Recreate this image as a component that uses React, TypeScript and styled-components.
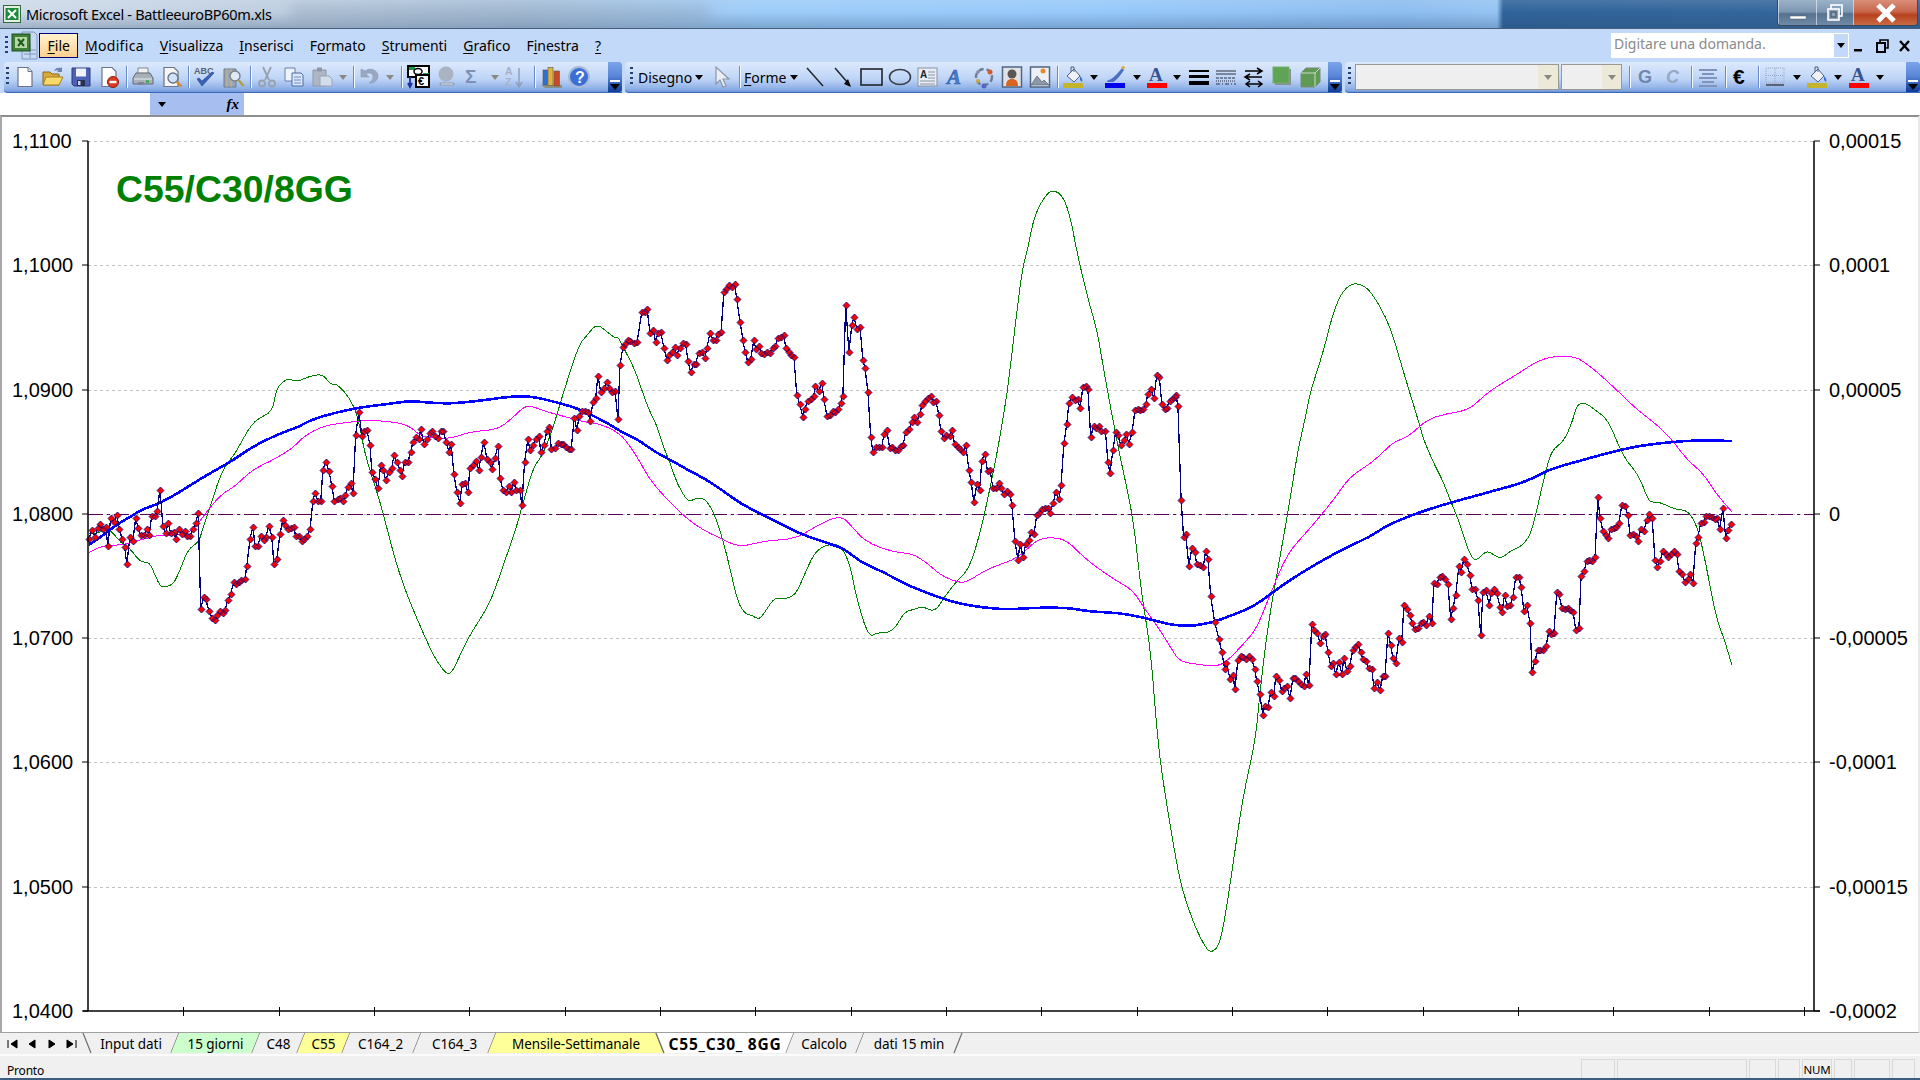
import React from "react"
import styled, { createGlobalStyle } from "styled-components"

const UI_FONT = `"Noto Sans", "Liberation Sans", sans-serif`

const GlobalStyle = createGlobalStyle`
  html, body {
    margin: 0;
    padding: 0;
    background: #fff;
    overflow: hidden;
  }
`

const Window = styled.div`
  width: 1920px;
  height: 1080px;
  display: flex;
  flex-direction: column;
  overflow: hidden;
  font-family: ${UI_FONT};
  color: #000;
`

const TitleBar = styled.div`
  position: relative;
  height: 28px;
  flex: none;
  display: flex;
  align-items: center;
  gap: 5px;
  padding-left: 3px;
  overflow: hidden;
  border-bottom: 1px solid #47607a;
  background:
    linear-gradient(180deg, rgba(255, 255, 255, 0.12) 0%, rgba(255, 255, 255, 0) 45%, rgba(40, 70, 110, 0.28) 100%),
    linear-gradient(
      90deg,
      #cfdbe9 0,
      #bccde0 300px,
      #a9c2dc 520px,
      #9ccbf8 760px,
      #96c8fa 1100px,
      #8cbcf0 1400px,
      #94c3f2 1497px,
      #30639a 1503px,
      #33669b 1780px
    );
`

const TitleSmudge = styled.div`
  position: absolute;
  left: 290px;
  top: 6px;
  width: 420px;
  height: 16px;
  background: #8ea0b6;
  opacity: 0.45;
  filter: blur(7px);
`

const TitleText = styled.span`
  position: relative;
  font-size: 14.5px;
  letter-spacing: -0.3px;
  white-space: nowrap;
`

const CaptionButtons = styled.div`
  position: absolute;
  right: 2px;
  top: 0;
  height: 25px;
  display: flex;
  border: 1px solid #3a4a5c;
  border-top: none;
  border-radius: 0 0 4px 4px;
  overflow: hidden;
`

const CaptionButton = styled.div<{ $w: number; $close?: boolean }>`
  width: ${(p) => p.$w}px;
  display: flex;
  align-items: center;
  justify-content: center;
  border-left: 1px solid rgba(255, 255, 255, 0.55);
  background: ${(p) =>
    p.$close
      ? "linear-gradient(180deg, #d98e78 0%, #c9684e 45%, #b8421f 60%, #c96a45 100%)"
      : "linear-gradient(180deg, #9bb2c9 0%, #7d96b0 48%, #56728f 55%, #6e8aa6 100%)"};
`

const MenuBar = styled.div`
  height: 33px;
  flex: none;
  display: flex;
  align-items: center;
  background: #c3d9f9;
  padding-left: 4px;
`

const Grip = styled.div`
  width: 3px;
  height: 20px;
  margin: 0 2px 0 1px;
  flex: none;
  background: repeating-linear-gradient(180deg, #27416e 0 2px, transparent 2px 5px);
`

const SheetLogo = styled.svg`
  width: 30px;
  height: 32px;
  flex: none;
  margin-right: -1px;
`

const MenuList = styled.div`
  display: flex;
  align-items: center;
  gap: 16px;
  font-size: 14px;
`

const MenuItem = styled.span<{ $open?: boolean; $track?: number }>`
  display: flex;
  align-items: center;
  height: 25px;
  white-space: nowrap;
  letter-spacing: ${(p) => p.$track ?? 0}px;
  ${(p) =>
    p.$open &&
    `
    margin-right: -9.400px;
    padding: 0 7.500px;
    box-sizing: border-box;
    border: 1px solid #000080;
    background: linear-gradient(180deg, #fff3cf 0%, #ffd08f 100%);
  `}
  u {
    text-underline-offset: 2px;
  }
`

const MenuRight = styled.div`
  margin-left: auto;
  display: flex;
  align-items: center;
`

const HelpBox = styled.div`
  width: 238px;
  height: 25px;
  display: flex;
  align-items: center;
  background: #fff;
  color: #8a8a8a;
  font-size: 14px;
  padding: 0 0 4px 3px;
  box-sizing: border-box;
  position: relative;
`

const HelpDrop = styled.div`
  position: absolute;
  right: 0;
  top: 0;
  bottom: 0;
  width: 16px;
  display: flex;
  align-items: center;
  justify-content: center;
  background: #c3d9f9;
  border: 1px solid #fff;
  box-sizing: border-box;
`

const MdiButtons = styled.div`
  display: flex;
  width: 71px;
  height: 25px;
  align-items: center;
  padding-left: 3px;
  box-sizing: border-box;
`

const MdiIcon = styled.svg`
  width: 21px;
  height: 16px;
  flex: none;
`

const ToolRow = styled.div`
  height: 31px;
  flex: none;
  display: flex;
  background: #c3d9f9;
  gap: 3px;
  padding-left: 4px;
`

const Toolbar = styled.div<{ $w: number }>`
  width: ${(p) => p.$w}px;
  flex: none;
  display: flex;
  align-items: center;
  position: relative;
  border-radius: 4px 0 0 4px;
  overflow: hidden;
  box-sizing: border-box;
  border-bottom: 1px solid #3b69b5;
  background: linear-gradient(180deg, #dde9fc 0%, #cfe0fa 25%, #bdd3f6 58%, #8dafe6 90%, #6f96da 100%);
`

const Tool = styled.div<{ $w: number }>`
  width: ${(p) => p.$w}px;
  height: 26px;
  flex: none;
  display: flex;
  align-items: center;
  justify-content: center;
`

const Glyph = styled.svg`
  width: 24px;
  height: 24px;
  display: block;
  overflow: visible;
`

const Sep = styled.div<{ $w: number }>`
  width: ${(p) => p.$w}px;
  height: 22px;
  flex: none;
  display: flex;
  justify-content: center;
  &::before {
    content: "";
    width: 1px;
    background: #6a8cc8;
    box-shadow: 1px 0 0 #f4f8ff;
  }
`

const DropArrow = styled.span<{ $muted?: boolean }>`
  width: 0;
  height: 0;
  border-left: 4px solid transparent;
  border-right: 4px solid transparent;
  border-top: 5px solid ${(p) => (p.$muted ? "#8a8a80" : "#000")};
`

const TextTool = styled.div<{ $w: number }>`
  width: ${(p) => p.$w}px;
  height: 26px;
  flex: none;
  display: flex;
  align-items: center;
  gap: 3px;
  font-size: 14px;
  white-space: nowrap;
  u {
    text-underline-offset: 2px;
  }
`

const Overflow = styled.div`
  position: absolute;
  right: 0;
  top: 0;
  bottom: 0;
  width: 14px;
  display: flex;
  flex-direction: column;
  align-items: center;
  justify-content: flex-end;
  gap: 2px;
  padding-bottom: 2px;
  box-sizing: border-box;
  border-radius: 0 3px 3px 0;
  background: linear-gradient(180deg, #7ba4ec 0%, #5b87d8 45%, #0e3c98 100%);
  &::before {
    content: "";
    width: 10px;
    height: 2px;
    background: #fff;
  }
  &::after {
    content: "";
    border-left: 5px solid transparent;
    border-right: 5px solid transparent;
    border-top: 6px solid #000;
  }
`

const Combo = styled.div<{ $w: number; $btn: number }>`
  width: ${(p) => p.$w}px;
  height: 26px;
  flex: none;
  box-sizing: border-box;
  border: 1px solid #9a9a94;
  background: #efefef;
  display: flex;
  justify-content: flex-end;
  margin-right: 2px;
  & > span {
    width: ${(p) => p.$btn}px;
    background: #ece9d8;
    display: flex;
    align-items: center;
    justify-content: center;
  }
`

const FormulaRow = styled.div`
  height: 22px;
  flex: none;
  display: flex;
  background: #fff;
`

const NameBox = styled.div`
  width: 150px;
`

const FxBlock = styled.div`
  width: 94px;
  background: #a6bff0;
  display: flex;
  align-items: center;
  justify-content: space-between;
  padding: 0 5px 0 8px;
  box-sizing: border-box;
  font-family: "Liberation Serif", serif;
  font-style: italic;
  font-weight: bold;
  font-size: 15px;
`

const ChartPanel = styled.div`
  flex: 1;
  min-height: 0;
  background: #fff;
  border-top: 2px solid #8f8f8f;
  border-left: 2px solid #a8a8a8;
  border-right: 2px solid #e8e8e8;
  border-bottom: 1px solid #a0a0a0;
  box-sizing: border-box;
  overflow: hidden;
`

const ChartSvg = styled.svg`
  display: block;
  margin: -2px 0 0 -2px;
  text {
    font-family: "Liberation Sans", Arial, sans-serif;
  }
`

const TabBar = styled.div`
  height: 21px;
  flex: none;
  display: flex;
  background: #f0f0f0;
  border-bottom: 2px solid #fbfbfb;
`

const TabNav = styled.div`
  width: 83px;
  flex: none;
  display: flex;
  align-items: center;
  padding-left: 6px;
  box-sizing: border-box;
  gap: 8px;
`

const NavGlyph = styled.svg`
  width: 12px;
  height: 10px;
  flex: none;
`

const TabItem = styled.div<{ $w: number }>`
  position: relative;
  width: ${(p) => p.$w}px;
  flex: none;
  height: 20px;
`

const TabShape = styled.svg`
  position: absolute;
  left: 0;
  top: 0;
  overflow: visible;
`

const TabLabel = styled.span<{ $active?: boolean; $shift: number }>`
  position: absolute;
  left: ${(p) => p.$shift}px;
  right: ${(p) => -p.$shift}px;
  top: 1px;
  height: 20px;
  display: flex;
  align-items: center;
  justify-content: center;
  font-size: ${(p) => (p.$active ? 15.5 : 13.5)}px;
  letter-spacing: ${(p) => (p.$active ? 0.8 : -0.05)}px;
  font-weight: ${(p) => (p.$active ? 700 : 400)};
  white-space: nowrap;
`

const StatusBar = styled.div`
  height: 22px;
  flex: none;
  display: flex;
  align-items: flex-end;
  background: #f0f0f0;
  font-size: 12px;
  letter-spacing: -0.2px;
  padding-left: 7px;
  box-sizing: border-box;
`

const StatusText = styled.span`
  height: 19px;
  padding-top: 3px;
  box-sizing: border-box;
  display: flex;
  align-items: center;
`

const StatusCells = styled.div`
  margin-left: auto;
  display: flex;
  gap: 2px;
  padding-right: 5px;
`

const StatusCell = styled.div<{ $w: number }>`
  width: ${(p) => p.$w}px;
  height: 19px;
  box-sizing: border-box;
  border: 1px solid #d9d9d9;
  border-bottom: none;
  font-size: 11.5px;
  display: flex;
  align-items: center;
  justify-content: center;
`

const BottomStrip = styled.div`
  height: 2px;
  flex: none;
  background: #3d5e80;
`

/* ---------- toolbar drawings ---------- */

const doc = (fill = "#fff") => (
  <path d="M5 2.5h10l4 4v15H5z" fill={fill} stroke="#6b7488" strokeWidth="1.2" />
)

const icons: Record<string, React.ReactNode> = {
  new: (
    <>
      {doc()}
      <path d="M15 2.5v4h4" fill="#dde3ee" stroke="#6b7488" />
    </>
  ),
  open: (
    <>
      <path d="M2 7h7l2 2h7v11H2z" fill="#d9a93a" stroke="#8a6a1a" />
      <path d="M5 12h17l-4 8H2z" fill="#f7d96a" stroke="#a57f20" />
      <path d="M13 6c1-3 4-4 7-3l1-1v5h-5l1.500-1.500C16 5 14.500 5 13 6z" fill="#6b83b5" />
    </>
  ),
  save: (
    <>
      <path d="M3 3h18v18H5l-2-2z" fill="#4d62b5" stroke="#2c3a80" />
      <rect x="7" y="3.500" width="10" height="8" fill="#eef2fb" />
      <rect x="8" y="15" width="8" height="6" fill="#2a2f55" />
      <rect x="9" y="16" width="2.500" height="4" fill="#c8cfe0" />
    </>
  ),
  perm: (
    <>
      {doc()}
      <circle cx="16" cy="17" r="5.500" fill="#d93a22" stroke="#8f1d0e" />
      <rect x="12.500" y="15.800" width="7" height="2.400" fill="#fff" />
    </>
  ),
  print: (
    <>
      <path d="M7 3h10v7H7z" fill="#f2f2f2" stroke="#7d8794" />
      <path d="M5 8l-3 5v6h20v-6l-3-5z" fill="#a8b0ba" stroke="#5f6875" />
      <path d="M3 14h18" stroke="#e7ebf0" />
      <rect x="15" y="15.500" width="3" height="2" fill="#23a03a" />
      <path d="M7 17h6v3H7z" fill="#7d8794" />
    </>
  ),
  preview: (
    <>
      {doc("#f6f6f6")}
      <circle cx="14" cy="13" r="5" fill="#cfe2f7" stroke="#6b7488" strokeWidth="1.400" />
      <path d="M17.500 16.500l5 5" stroke="#d08a35" strokeWidth="2.400" />
    </>
  ),
  spell: (
    <>
      <text x="1" y="9" fontSize="9" fontWeight="700" fill="#5a6470" fontFamily="Liberation Sans">
        ABC
      </text>
      <path d="M4 14l5 7L21 8l-2-1-10 9-3-3z" fill="#3a63b5" stroke="#27458a" strokeWidth=".6" />
    </>
  ),
  research: (
    <>
      <path d="M3 4h12v18H3z" fill="#9aa6b8" stroke="#6d7a90" />
      <path d="M6 4v18M10 4v18" stroke="#c9b772" />
      <circle cx="14" cy="11" r="5" fill="#dfe9f6" stroke="#77818f" strokeWidth="1.400" />
      <path d="M17.500 15l5 6" stroke="#b79c3a" strokeWidth="2.400" />
    </>
  ),
  cut: (
    <g fill="none" stroke="#98a1ae" strokeWidth="1.800">
      <path d="M8 2l6 13M16 2l-6 13" />
      <circle cx="7" cy="18.500" r="3" />
      <circle cx="17" cy="18.500" r="3" />
    </g>
  ),
  copy: (
    <>
      <path d="M3 3h10v13H3z" fill="#eef3fb" stroke="#6b7fa6" />
      <path d="M10 8h9l2 2v11H10z" fill="#dbe8fa" stroke="#4c6aa5" />
      <path d="M12 12h7M12 15h7M12 18h7" stroke="#6b8ac2" />
    </>
  ),
  paste: (
    <>
      <path d="M3 5h13v16H3z" fill="#aeb6c2" stroke="#8d97a6" />
      <rect x="7" y="2.500" width="5" height="4" fill="#8d97a6" />
      <path d="M10 11h9l3 3v7H10z" fill="#d3dceb" stroke="#9aa5b6" />
    </>
  ),
  undo: (
    <path
      d="M4 4v8h8l-3-3c3-2 7-1 7 3 0 3-2 5-4 6h3c3-1 6-3 6-7 0-6-8-9-13-5z"
      fill="#99a8c0"
      stroke="#8b9ab2"
      strokeWidth=".6"
    />
  ),
  euro: (
    <>
      <rect x="1" y="1" width="21" height="11" fill="#fff" stroke="#000" strokeWidth="2" />
      <path d="M2 2h6v3H2zM16 8h6v4h-6z" fill="#1c9a3e" />
      <ellipse cx="11" cy="6.500" rx="4" ry="3" fill="none" stroke="#000" strokeWidth="1.500" />
      <rect x="8" y="9" width="15" height="14" fill="#000" />
      <rect x="10" y="11" width="11" height="10" fill="#fff" />
      <text x="11" y="20" fontSize="11" fontWeight="700" fontFamily="Liberation Sans">
        €
      </text>
      <path d="M3 12v9M1 18l2 4 2-4" fill="none" stroke="#1c2fa0" strokeWidth="1.800" />
    </>
  ),
  link: (
    <>
      <circle cx="11" cy="9" r="7.500" fill="#a9b3c2" />
      <path d="M6 19h5M13 19h5" stroke="#8d98a8" strokeWidth="3" strokeLinecap="round" />
      <path d="M6 19h12" stroke="#e0e6ef" strokeWidth="1" />
    </>
  ),
  sigma: (
    <text x="4" y="18" fontSize="19" fontWeight="700" fill="#7f90b5" fontFamily="Liberation Sans">
      Σ
    </text>
  ),
  sort: (
    <>
      <text x="1" y="10" fontSize="10.500" fontWeight="700" fill="#a5b2c8" fontFamily="Liberation Sans">
        A
      </text>
      <text x="1" y="21" fontSize="10.500" fontWeight="700" fill="#a5b2c8" fontFamily="Liberation Sans">
        Z
      </text>
      <path d="M15 3v18M12 17l3 5 3-5" fill="none" stroke="#90a0bb" strokeWidth="1.500" />
    </>
  ),
  chart: (
    <>
      <path d="M2 20l4 3h17v-3z" fill="#8d8f80" />
      <rect x="4" y="5" width="4.500" height="15" fill="#2f6fcf" stroke="#5a5a50" strokeWidth=".6" />
      <rect x="9" y="2.500" width="5" height="18" fill="#e3b23c" stroke="#5a5a50" strokeWidth=".6" />
      <rect x="15" y="6" width="5.500" height="15" fill="#c9482a" stroke="#5a5a50" strokeWidth=".6" />
    </>
  ),
  help: (
    <>
      <circle cx="12" cy="12" r="10" fill="#3a6fd6" stroke="#a7bbd8" strokeWidth="2" />
      <text x="8" y="18" fontSize="16" fontWeight="700" fill="#fff" fontFamily="Liberation Sans">
        ?
      </text>
    </>
  ),
  cursor: (
    <path d="M7 2v17l4-4 3 7 3-1-3-7h6z" fill="#e8edf7" stroke="#8a95a8" strokeWidth="1.200" />
  ),
  line: <path d="M4 3l16 18" stroke="#22242a" strokeWidth="1.500" />,
  arrow: (
    <>
      <path d="M4 3l13 15" stroke="#22242a" strokeWidth="1.500" />
      <path d="M20 22l-7-3 4-5z" fill="#000" />
    </>
  ),
  rect: <rect x="1" y="4" width="21" height="16" fill="none" stroke="#22242a" strokeWidth="1.600" />,
  oval: <ellipse cx="12" cy="12" rx="10.500" ry="7.500" fill="none" stroke="#3c3f48" strokeWidth="1.600" />,
  textbox: (
    <>
      <rect x="2" y="3" width="19" height="18" fill="#e9edf3" stroke="#8893a5" />
      <text x="4" y="13" fontSize="10" fontWeight="700" fill="#20242c" fontFamily="Liberation Sans">
        A
      </text>
      <path d="M12 7h7M12 10h7M12 13h7M4 16h15M4 19h15" stroke="#8a94a5" />
    </>
  ),
  wordart: (
    <text x="3" y="19" fontSize="21" fontWeight="700" fontStyle="italic" fill="#4a7fd0" stroke="#2c5aa8" strokeWidth=".6" fontFamily="Liberation Serif">
      A
    </text>
  ),
  diagram: (
    <>
      <circle cx="12" cy="12" r="8" fill="none" stroke="#6d7c94" strokeWidth="2.400" strokeDasharray="5 3" />
      <circle cx="18" cy="7" r="2.500" fill="#d35b2a" />
      <circle cx="6" cy="16" r="2" fill="#c9a640" />
      <circle cx="12" cy="21" r="2.500" fill="#5064c0" />
      <circle cx="6" cy="7" r="1.800" fill="#7f8ea8" />
    </>
  ),
  clipart: (
    <>
      <rect x="2.500" y="2" width="19" height="20" fill="#dfe2e8" stroke="#50657f" strokeWidth="1.500" />
      <circle cx="12" cy="9" r="4.500" fill="#5a5550" />
      <path d="M6 21c0-6 3-7 6-7s6 1 6 7z" fill="#d8641f" />
    </>
  ),
  picture: (
    <>
      <rect x="2.500" y="2" width="19" height="20" fill="#edf1f6" stroke="#50657f" strokeWidth="1.500" />
      <path d="M3 20l6-9 5 6 2-2 5 5z" fill="#8c99ab" stroke="#555f70" strokeWidth=".7" />
      <circle cx="15" cy="6" r="2.500" fill="#e8872b" />
    </>
  ),
  fill: (
    <>
      <path d="M6 11l7-7 6 7-6 6z" fill="#eef2f8" stroke="#50607a" />
      <path d="M10 7V2h3v5" fill="none" stroke="#50607a" />
      <path d="M19 11c2 2 3 4 2 6l-2-2z" fill="#3b6fcf" />
      <rect x="2" y="18" width="20" height="5" fill="#c4b32d" />
    </>
  ),
  brush: (
    <>
      <path d="M5 15c4 0 9-6 14-12l2 2c-4 6-8 11-11 12H4z" fill="#4d6fc2" />
      <path d="M18 2l3 3 1-3-2-1z" fill="#e0a92a" />
      <rect x="2" y="18" width="20" height="5" fill="#0000f0" />
    </>
  ),
  fontcolor: (
    <>
      <text x="4" y="16" fontSize="19" fontWeight="700" fill="#39538f" fontFamily="Liberation Serif">
        A
      </text>
      <rect x="2" y="18" width="20" height="5" fill="#f00" />
    </>
  ),
  lines: (
    <>
      <rect x="2" y="5" width="20" height="2" fill="#000" />
      <rect x="2" y="10" width="20" height="3" fill="#000" />
      <rect x="2" y="16" width="20" height="4" fill="#000" />
    </>
  ),
  dashes: (
    <g stroke="#2d3040" fill="none">
      <path d="M2 6h20M2 9h20" />
      <path d="M2 13h20" strokeDasharray="3 1" />
      <path d="M2 16h20" strokeDasharray="1 1" />
      <path d="M2 19h20" strokeDasharray="4 2 1 2" />
    </g>
  ),
  arrows: (
    <g stroke="#000" strokeWidth="1.500" fill="none">
      <path d="M3 6h16M15 3l5 3-5 3" />
      <path d="M4 12h16M8 9l-5 3 5 3" />
      <path d="M5 19h14M8 16l-4 3 4 3M16 16l4 3-4 3" />
    </g>
  ),
  shadow: (
    <>
      <rect x="5" y="4" width="16" height="16" fill="#8b8f98" />
      <rect x="3" y="2" width="16" height="16" fill="#5fa356" stroke="#72b26a" />
    </>
  ),
  cube: (
    <>
      <path d="M3 8l5-5h14v14l-5 5H3z" fill="#5f9a55" stroke="#7a8a7a" />
      <path d="M3 8h14v14M17 8l5-5" fill="none" stroke="#d0dccd" />
    </>
  ),
  bold: (
    <text x="5" y="18" fontSize="18" fontWeight="700" fill="#6f87ad" fontFamily="Liberation Sans">
      G
    </text>
  ),
  italic: (
    <text x="6" y="18" fontSize="18" fontWeight="700" fontStyle="italic" fill="#97a8c6" fontFamily="Liberation Sans">
      C
    </text>
  ),
  align: <path d="M3 5h18M6 9h12M3 13h18M6 17h12M3 21h18" stroke="#7f93bb" strokeWidth="1.800" />,
  eurosign: (
    <text x="3" y="19" fontSize="21" fontWeight="700" fill="#000" fontFamily="Liberation Sans">
      €
    </text>
  ),
  borders: (
    <>
      <path d="M3 3h18v15H3zM12 3v15M3 10.500h18" fill="none" stroke="#98a5bd" strokeDasharray="1 1" />
      <rect x="3" y="19" width="18" height="2" fill="#5a6478" />
    </>
  ),
}

type Item = [string, number]

const toolbarOne: Item[] = [
  ["grip", 7],
  ["new", 28],
  ["open", 28],
  ["save", 28],
  ["perm", 28],
  ["sep", 6],
  ["print", 28],
  ["preview", 28],
  ["sep", 6],
  ["spell", 28],
  ["research", 28],
  ["sep", 6],
  ["cut", 27],
  ["copy", 28],
  ["paste", 28],
  ["muted", 14],
  ["sep", 6],
  ["undo", 26],
  ["muted", 16],
  ["sep", 6],
  ["euro", 30],
  ["link", 26],
  ["sigma", 26],
  ["muted", 18],
  ["sort", 24],
  ["sep", 12],
  ["chart", 22],
  ["help", 34],
]

const toolbarTwoLeft: Item[] = [["cursor", 26], ["sep", 10]]

const toolbarTwoRight: Item[] = [
  ["line", 26],
  ["arrow", 30],
  ["rect", 28],
  ["oval", 28],
  ["textbox", 28],
  ["wordart", 28],
  ["diagram", 28],
  ["clipart", 28],
  ["picture", 28],
  ["sep", 6],
  ["fill", 26],
  ["drop", 16],
  ["brush", 26],
  ["drop", 18],
  ["fontcolor", 22],
  ["drop", 18],
  ["lines", 26],
  ["dashes", 28],
  ["arrows", 28],
  ["shadow", 28],
  ["cube", 28],
]

const toolbarThree: Item[] = [
  ["sep", 10],
  ["bold", 22],
  ["italic", 32],
  ["sep", 6],
  ["align", 28],
  ["sep", 6],
  ["eurosign", 28],
  ["sep", 4],
  ["borders", 30],
  ["drop", 14],
  ["fill", 26],
  ["drop", 16],
  ["fontcolor", 26],
  ["drop", 16],
]

const ToolItems: React.FC<{ items: Item[] }> = ({ items }) => (
  <>
    {items.map(([kind, w], i) => {
      if (kind === "sep") return <Sep key={i} $w={w} />
      if (kind === "grip")
        return (
          <Tool key={i} $w={w}>
            <Grip />
          </Tool>
        )
      if (kind === "drop" || kind === "muted")
        return (
          <Tool key={i} $w={w}>
            <DropArrow $muted={kind === "muted"} />
          </Tool>
        )
      return (
        <Tool key={i} $w={w}>
          <Glyph viewBox="0 0 24 24">{icons[kind]}</Glyph>
        </Tool>
      )
    })}
  </>
)

/* ---------- chart data, read off the picture in crop coordinates ---------- */

type Pts = number[]
type Pair = [number, number]

const crop =
  (x0: number, y0: number) =>
  (p: Pts): Pair[] => {
    const out: Pair[] = []
    for (let i = 0; i < p.length; i += 2) out.push([x0 + p[i] / 2.8, y0 + p[i + 1] / 3])
    return out
  }
const left = crop(80, 250)
const mid = crop(640, 250)
const right = crop(1180, 420)
const full = (p: Pts): Pair[] => {
  const out: Pair[] = []
  for (let i = 0; i < p.length; i += 2) out.push([p[i] * 1.2245, p[i + 1] * 1.2245])
  return out
}

const price: Pair[] = [
  ...left([
    25,867,33,840,42,860,50,833,56,822,64,836,72,831,78,888,86,803,95,815,103,795,110,837,118,867,125,890,131,942,140,860,148,872,156,803,162,833,170,855,180,855,187,837,193,855,201,797,209,797,215,783,224,720,232,827,240,850,246,818,254,848,263,845,268,867,277,836,285,853,293,843,299,857,308,857,317,837,324,818,331,788,338,1077,346,1040,352,1047,361,1083,369,1103,378,1110,383,1095,391,1082,401,1090,406,1080,414,1049,422,1031,431,996,437,1003,445,996,452,990,462,986,467,948,476,867,484,830,490,887,498,887,506,857,515,870,520,860,529,827,537,860,543,942,551,927,560,852,568,810,574,825,582,836,590,833,598,830,604,857,613,857,621,873,628,866,636,857,644,837,652,753,658,729,666,753,674,753,680,660,688,635,697,662,705,708,712,753,721,748,729,744,737,753,742,735,750,711,758,698,764,729,772,554,781,486,789,558,795,543,803,539,812,585,817,665,826,687,834,714,842,645,848,660,856,689,866,665,873,654,879,615,887,636,896,660,901,678,909,636,918,636,926,606,932,576,940,561,949,567,954,537,963,582,971,567,980,548,986,542,994,557,1002,564,1010,542,1017,543,1025,576,1033,606,1039,582,1047,672,1055,726,1064,759,1069,702,1078,699,1086,726,1092,654,1101,645,1109,633,1117,660,1122,621,1131,576,1139,627,1147,636,1153,657,1162,623,1170,588,1176,684,1184,720,1192,726,1201,708,1207,726,1215,695,1221,720,1232,720,1237,765,1245,636,1254,567,1260,600,1268,585,1276,567,1285,558,1290,606,1299,585,1307,543,1313,531,1320,597,1330,593,1338,579,1346,582,1353,581,1360,591,1368,597,1375,597,1384,504,1391,540,1398,497,1406,483,1414,482,1422,486,1428,513,1436,456,1444,444,1450,377,1458,426,1467,413,1475,396,1481,413,1489,426,1498,423,1506,507,1512,345,1520,291,1526,282,1533,270,1540,272,1550,279,1560,276,
  ]),
  ...mid([
    5,186,13,186,20,177,28,249,36,240,44,276,50,249,58,245,67,294,75,330,81,316,89,306,97,291,103,315,111,294,120,278,128,282,134,333,142,366,150,342,156,341,164,309,174,306,182,324,187,294,196,249,204,270,212,270,219,252,227,245,235,126,240,117,248,104,257,111,265,102,271,147,280,216,288,270,294,306,302,336,310,326,319,270,324,297,333,287,340,309,347,312,355,305,363,309,372,294,378,288,386,264,394,262,403,255,408,294,416,306,424,316,431,321,439,435,447,462,456,501,461,477,470,453,478,447,486,437,491,408,501,423,509,399,515,447,523,498,531,495,540,483,547,486,555,477,562,459,568,438,576,165,585,306,593,225,599,201,607,237,616,231,624,330,630,354,638,426,646,561,652,606,660,591,668,591,677,591,683,552,691,540,699,594,706,591,713,600,721,600,730,587,737,584,744,546,753,537,761,516,767,501,775,516,783,492,790,465,798,452,806,444,814,438,820,456,828,453,837,495,842,543,851,564,858,555,867,558,873,540,881,581,889,591,897,597,904,606,912,585,921,660,927,696,935,756,943,702,951,720,957,633,965,612,973,663,980,660,988,714,996,714,1005,699,1011,714,1019,732,1027,723,1036,732,1041,765,1050,873,1058,930,1064,882,1073,921,1080,882,1089,870,1095,846,1103,852,1111,795,1118,789,1126,778,1135,775,1142,773,1148,789,1157,759,1164,726,1173,747,1179,705,1187,579,1195,522,1201,459,1209,441,1217,450,1225,447,1232,474,1240,411,1248,408,1254,417,1262,561,1270,527,1277,534,1285,528,1292,543,1303,543,1310,636,1316,669,1324,600,1332,546,1338,555,1346,585,1355,570,1362,552,1369,582,1378,546,1386,480,1395,478,1401,480,1409,477,1416,462,1422,432,1430,417,1439,444,1447,375,1454,381,1461,462,1469,477,1475,474,1483,453,1490,447,1497,440,1501,436,1506,468,1515,750,1522,861,1528,852,
  ]),
  ...right([
    25,438,33,385,41,395,47,432,56,435,65,441,72,393,78,417,86,528,97,606,109,657,117,696,125,747,130,730,140,777,148,765,154,807,162,720,170,707,176,712,184,717,193,707,201,716,209,747,215,783,223,822,232,885,237,858,246,861,254,816,263,828,268,767,277,780,285,813,292,803,299,797,308,834,316,773,323,773,330,783,338,792,347,798,352,762,361,795,369,612,375,630,384,638,392,669,400,648,406,642,414,696,422,738,428,729,436,762,445,726,453,762,459,714,467,753,475,738,484,690,490,681,498,672,506,696,512,717,520,723,529,744,537,747,543,804,551,786,560,810,568,768,574,767,582,639,590,675,596,714,604,730,613,654,621,666,627,555,635,567,644,585,649,609,658,627,666,623,674,609,680,605,688,615,697,588,705,609,711,489,719,492,727,471,733,469,742,477,750,492,758,597,764,564,772,525,781,438,787,456,795,417,803,432,812,465,817,507,826,507,834,540,842,645,848,516,856,510,866,555,871,519,879,507,887,519,896,561,901,576,909,525,916,558,924,555,932,531,940,472,949,470,955,501,963,573,971,555,980,609,986,756,994,722,1002,690,1008,690,1017,690,1025,678,1033,633,1039,642,1047,639,1055,516,1061,522,1069,564,1078,567,1086,563,1092,570,1101,576,1108,630,1117,624,1123,468,1131,453,1139,423,1145,420,1153,423,1162,411,1170,231,1176,294,1184,333,1192,345,1198,354,1206,327,1215,324,1221,321,1229,309,1237,255,1246,258,1254,285,1260,345,1268,342,1276,348,1282,363,1290,327,1299,333,1307,300,1313,282,1322,294,1330,420,1336,441,1344,423,1352,393,1360,402,1366,411,1375,402,1383,394,1391,402,1397,453,1405,462,1414,487,1421,477,1428,462,1436,489,1444,369,1450,351,1458,309,1467,306,1472,288,1480,287,1489,292,1497,297,1503,294,1511,327,1520,264,1528,354,1534,330,1543,312,
  ]),
]

const green: Pair[] = [
  ...left([
    25,852,50,850,72,838,90,845,115,880,140,895,160,925,175,937,195,937,210,975,225,1010,240,1011,262,1002,280,960,300,905,318,885,333,875,345,830,365,770,385,700,405,650,435,610,460,560,480,525,500,505,538,485,548,430,557,405,583,384,606,397,645,377,680,373,695,395,708,405,718,402,745,430,765,465,780,510,790,570,805,640,830,720,850,795,880,920,910,1020,945,1110,980,1195,1000,1235,1028,1275,1045,1262,1070,1200,1100,1140,1140,1075,1165,1010,1190,930,1220,840,1240,760,1270,650,1290,625,1320,550,1350,440,1380,340,1400,280,1420,255,1447,220,1480,250,1500,265,1507,260,1520,290,1550,350,1568,405,
  ]),
  ...mid([
    25,480,45,520,65,590,85,640,105,705,135,757,155,745,182,744,210,795,235,880,255,970,275,1060,295,1092,312,1095,332,1108,345,1095,375,1043,400,1048,435,1037,460,975,485,915,510,890,530,884,563,884,590,950,605,1040,640,1163,665,1147,690,1150,715,1135,740,1085,770,1078,790,1068,825,1087,850,1045,885,995,920,960,950,860,975,740,1000,610,1030,420,1050,230,1070,60,1085,0,1105,-108,1140,-171,1159,-180,1184,-162,1205,-100,1222,0,1255,150,1280,240,1300,370,1340,600,1365,720,1385,840,1405,1040,1430,1200,
  ]),
  ...full([945,600,950,640,960,700,965,725,975,755,985,775,990,778,997,770,1005,720,1015,650]),
  ...right([
    212,960,225,800,250,590,275,440,305,260,330,90,350,0,
  ]),
  ...full([1070,320,1080,290,1090,250,1100,233,1110,231,1120,238,1135,265,1145,300]),
  ...right([
    667,0,682,60,715,140,735,180,760,250,780,300,805,385,820,418,835,418,845,403,865,392,890,415,910,408,925,392,955,380,980,348,995,290,1020,170,1040,90,1075,65,1100,0,
  ]),
  ...full([1288,330,1295,329,1303,335]),
  ...right([
    1200,0,1240,110,1285,165,1310,240,1325,247,1345,247,1390,270,1420,270,1445,310,1465,390,1500,590,1525,660,1545,735,
  ]),
]

const magenta: Pair[] = [
  ...left([
    25,908,50,893,75,886,120,885,160,872,200,862,220,855,290,855,320,835,345,800,365,770,400,730,430,712,470,672,500,650,540,630,595,595,625,560,680,528,740,518,800,511,860,513,920,525,955,560,1000,565,1040,565,1080,550,1115,543,1170,538,1210,505,1245,468,1270,470,1310,487,1370,503,1420,518,1450,520,1505,545,1535,580,1568,635,
  ]),
  ...mid([
    25,685,60,730,110,785,160,830,230,868,280,892,350,872,435,867,490,830,560,795,590,825,630,875,710,907,760,910,800,935,840,975,890,997,915,997,975,955,1060,925,1110,868,1155,862,1195,870,1250,930,1330,990,1380,1020,1415,1080,1450,1130,1490,1200,
  ]),
  ...right([
    0,725,50,733,100,740,130,725,180,670,215,625,250,530,300,400,360,330,430,240,475,170,535,130,575,90,600,65,640,50,690,0,
  ]),
  ...full([1180,338,1200,335,1215,320,1240,305,1260,292,1285,290,1300,300,1320,318,1335,333]),
  ...right([1360,35,1420,120,1465,160,1500,220,1545,275]),
]

const blue: Pair[] = [
  ...left([
    25,885,60,860,100,825,150,795,170,780,210,765,250,745,300,712,340,685,380,660,430,630,480,592,560,550,610,532,640,513,690,495,780,472,860,463,920,452,1020,462,1100,455,1200,440,1260,438,1340,458,1400,478,1470,515,1520,548,1568,572,
  ]),
  ...mid([
    40,605,90,632,130,658,180,685,230,720,280,760,340,792,400,825,450,852,540,885,570,895,620,938,680,965,730,995,770,1015,850,1047,910,1065,1020,1080,1100,1073,1200,1073,1260,1085,1340,1088,1420,1105,1500,1128,1560,1125,
  ]),
  ...right([
    30,618,90,608,140,588,210,558,280,500,360,445,460,385,530,352,585,312,700,265,880,212,970,185,1030,150,1100,128,1230,90,1300,75,1430,60,1545,63,
  ]),
]

const toPath = (p: Pair[]) => p.map(([x, y], i) => `${i ? "L" : "M"}${x.toFixed(1)} ${y.toFixed(1)}`).join("")

// the slow averages are curves in the picture: round off the joints through the midpoints
const toCurve = (p: Pair[]) => {
  let d = `M${p[0][0].toFixed(1)} ${p[0][1].toFixed(1)}`
  for (let i = 1; i < p.length - 1; i++) {
    const mx = (p[i][0] + p[i + 1][0]) / 2
    const my = (p[i][1] + p[i + 1][1]) / 2
    d += `Q${p[i][0].toFixed(1)} ${p[i][1].toFixed(1)} ${mx.toFixed(1)} ${my.toFixed(1)}`
  }
  const last = p[p.length - 1]
  return `${d}L${last[0].toFixed(1)} ${last[1].toFixed(1)}`
}

const diamonds = (p: Pair[]) =>
  p
    .map(([x, y]) => {
      const cx = Math.round(x) + 0.5
      const cy = Math.round(y) + 0.5
      return `M${cx} ${cy - 3.5}L${cx + 3.5} ${cy}L${cx} ${cy + 3.5}L${cx - 3.5} ${cy}Z`
    })
    .join("")

const PLOT = { x0: 88, x1: 1814, top: 141, step: 124.29 }
const leftLabels = ["1,1100", "1,1000", "1,0900", "1,0800", "1,0700", "1,0600", "1,0500", "1,0400"]
const rightLabels = ["0,00015", "0,0001", "0,00005", "0", "-0,00005", "-0,0001", "-0,00015", "-0,0002"]
const gridY = leftLabels.map((_, i) => Math.round(PLOT.top + PLOT.step * i))
const bottomTicks = Array.from({ length: 18 }, (_, i) => Math.round(PLOT.x0 + 95.33 * (i + 1)))

const Chart: React.FC = () => (
  <ChartSvg width="1920" height="918" viewBox="0 115 1920 918">
    {gridY.slice(0, 7).map((y) => (
      <path key={y} d={`M${PLOT.x0} ${y}H${PLOT.x1}`} stroke="#c0c0c0" strokeDasharray="3 3" shapeRendering="crispEdges" />
    ))}
    <path
      d={`M${PLOT.x0} ${gridY[3]}H${PLOT.x1}`}
      stroke="#5a005a"
      strokeDasharray="15 4 3 4"
      shapeRendering="crispEdges"
    />
    <path d={toCurve(green)} fill="none" stroke="#008000" strokeWidth="1" shapeRendering="crispEdges" />
    <path d={toCurve(magenta)} fill="none" stroke="#ff00ff" strokeWidth="1" shapeRendering="crispEdges" />
    <path d={toCurve(blue)} fill="none" stroke="#0000ff" strokeWidth="2.600" shapeRendering="crispEdges" />
    <path d={toPath(price)} fill="none" stroke="#000080" strokeWidth="1.300" shapeRendering="crispEdges" />
    <path d={diamonds(price)} fill="#ff0000" stroke="#000080" strokeWidth="0.800" />

    <path d={`M${PLOT.x0} ${PLOT.top}V${gridY[7]}M${PLOT.x1} ${PLOT.top}V${gridY[7]}`} stroke="#000" strokeWidth="1.500" />
    <path d={`M83 ${gridY[7]}H1820`} stroke="#000" strokeWidth="1.500" />
    {gridY.map((y) => (
      <path key={y} d={`M82 ${y}H${PLOT.x0}M${PLOT.x1} ${y}H1820`} stroke="#000" strokeWidth="1.200" />
    ))}
    {bottomTicks.map((x) => (
      <path key={x} d={`M${x} ${gridY[7] - 4}V${gridY[7] + 5}`} stroke="#000" shapeRendering="crispEdges" />
    ))}

    {leftLabels.map((t, i) => (
      <text key={t} x="12" y={gridY[i] + 7} fontSize="20" fill="#000">
        {t}
      </text>
    ))}
    {rightLabels.map((t, i) => (
      <text key={t} x="1829" y={gridY[i] + 7} fontSize="20" fill="#000">
        {t}
      </text>
    ))}
    <text x="116" y="202" fontSize="37.400" fontWeight="700" fill="#008000">
      C55/C30/8GG
    </text>
  </ChartSvg>
)

/* ---------- sheet tabs ---------- */

const tabs = [
  { name: "Input dati", w: 96, fill: "#f0f0f0", lead: 8, trail: -8, shift: 0 },
  { name: "15 giorni", w: 81, fill: "#ccffcc", lead: -8, trail: -8, shift: -4 },
  { name: "C48", w: 45, fill: "#f0f0f0", lead: -8, trail: -8, shift: -4 },
  { name: "C55", w: 45, fill: "#ffff99", lead: -8, trail: -8, shift: -4 },
  { name: "C164_2", w: 71, fill: "#f0f0f0", lead: -8, trail: -8, shift: -5 },
  { name: "C164_3", w: 75, fill: "#f0f0f0", lead: -8, trail: -8, shift: -4 },
  { name: "Mensile-Settimanale", w: 160, fill: "#ffff99", lead: -8, trail: 8, shift: 0 },
  { name: "C55_C30_ 8GG", w: 138, fill: "#ffffff", lead: 8, trail: -8, shift: 0, active: true },
  { name: "Calcolo", w: 70, fill: "#f0f0f0", lead: -8, trail: -8, shift: -5 },
  { name: "dati 15 min", w: 98, fill: "#f0f0f0", lead: -8, trail: -8, shift: -4 },
]

const statusCells = [34, 130, 27, 22, 30, 18, 36, 23]

const navIcons = ["M2 1v8M11 1L5 5l6 4z", "M9 1L3 5l6 4z", "M3 1l6 4-6 4z", "M1 1l6 4-6 4zM10 1v8"]

const App: React.FC = () => (
  <Window>
    <GlobalStyle />
    <TitleBar>
      <TitleSmudge />
      <svg width="18" height="18" viewBox="0 0 18 18" style={{ flex: "none", position: "relative" }}>
        <rect x=".5" y=".5" width="17" height="17" fill="#e6efe2" stroke="#2f6b3a" />
        <rect x="2.500" y="3" width="13" height="12" fill="#1f8a3c" />
        <path d="M5 5l8 8M13 5l-8 8" stroke="#fff" strokeWidth="2" />
      </svg>
      <TitleText>Microsoft Excel - BattleeuroBP60m.xls</TitleText>
      <CaptionButtons>
        <CaptionButton $w={37}>
          <svg width="16" height="16" viewBox="0 0 16 16">
            <rect x="0" y="11" width="16" height="3" fill="#fff" stroke="#4a5a6a" strokeWidth=".5" />
          </svg>
        </CaptionButton>
        <CaptionButton $w={36}>
          <svg width="20" height="18" viewBox="0 0 20 18">
            <rect x="6" y="1" width="11" height="11" fill="none" stroke="#fff" strokeWidth="1.600" />
            <rect x="3" y="5" width="11" height="11" fill="#8aa0b8" stroke="#fff" strokeWidth="1.600" />
            <rect x="6" y="8" width="5" height="5" fill="none" stroke="#35485c" />
          </svg>
        </CaptionButton>
        <CaptionButton $w={63} $close>
          <svg width="22" height="20" viewBox="0 0 22 20">
            <path d="M3 2l16 16M19 2L3 18" stroke="#fff" strokeWidth="5" />
          </svg>
        </CaptionButton>
      </CaptionButtons>
    </TitleBar>

    <MenuBar>
      <Grip />
      <SheetLogo viewBox="0 0 30 32">
        <path d="M12 2h12l3 3v24H12z" fill="#c7d8f2" stroke="#7f96bd" />
        <path d="M14 20h12M14 24h12M20 14v14" stroke="#7f96bd" />
        <rect x="2" y="4" width="18" height="17" fill="#3f7f38" stroke="#1f4f1c" />
        <rect x="5" y="7" width="12" height="11" fill="#b7d7a4" />
        <path d="M8 9l6 7M14 9l-6 7" stroke="#1c5a1c" strokeWidth="2" />
      </SheetLogo>
      <MenuList>
        <MenuItem $open>
          <span>
            <u>F</u>ile
          </span>
        </MenuItem>
        <MenuItem $track={0.3}>
          <span>
            <u>M</u>odifica
          </span>
        </MenuItem>
        <MenuItem>
          <span>
            <u>V</u>isualizza
          </span>
        </MenuItem>
        <MenuItem>
          <span>
            <u>I</u>nserisci
          </span>
        </MenuItem>
        <MenuItem>
          <span>
            F<u>o</u>rmato
          </span>
        </MenuItem>
        <MenuItem>
          <span>
            <u>S</u>trumenti
          </span>
        </MenuItem>
        <MenuItem>
          <span>
            <u>G</u>rafico
          </span>
        </MenuItem>
        <MenuItem>
          <span>
            F<u>i</u>nestra
          </span>
        </MenuItem>
        <MenuItem>
          <u>?</u>
        </MenuItem>
      </MenuList>
      <MenuRight>
        <HelpBox>
          Digitare una domanda.
          <HelpDrop>
            <DropArrow />
          </HelpDrop>
        </HelpBox>
        <MdiButtons>
          <MdiIcon viewBox="0 0 21 16">
            <rect x="2" y="11" width="8" height="2.500" fill="#000" />
          </MdiIcon>
          <MdiIcon viewBox="0 0 21 16">
            <path d="M7 5V2h8v8h-3" fill="none" stroke="#000" strokeWidth="1.600" />
            <rect x="4" y="5" width="8" height="9" fill="none" stroke="#000" strokeWidth="2" />
          </MdiIcon>
          <MdiIcon viewBox="0 0 21 16">
            <path d="M6 3l9 10M15 3L6 13" stroke="#000" strokeWidth="2.400" />
          </MdiIcon>
        </MdiButtons>
      </MenuRight>
    </MenuBar>

    <ToolRow>
      <Toolbar $w={618}>
        <ToolItems items={toolbarOne} />
        <Overflow />
      </Toolbar>
      <Toolbar $w={717}>
        <Tool $w={13}>
          <Grip />
        </Tool>
        <TextTool $w={70}>
          <span>
            Dise<u>g</u>no
          </span>
          <DropArrow />
        </TextTool>
        <ToolItems items={toolbarTwoLeft} />
        <TextTool $w={58}>
          <span>
            <u>F</u>orme
          </span>
          <DropArrow />
        </TextTool>
        <ToolItems items={toolbarTwoRight} />
        <Overflow />
      </Toolbar>
      <Toolbar $w={575}>
        <Tool $w={10}>
          <Grip />
        </Tool>
        <Combo $w={204} $btn={20}>
          <span>
            <DropArrow $muted />
          </span>
        </Combo>
        <Combo $w={61} $btn={19}>
          <span>
            <DropArrow $muted />
          </span>
        </Combo>
        <ToolItems items={toolbarThree} />
        <Overflow />
      </Toolbar>
    </ToolRow>

    <FormulaRow>
      <NameBox />
      <FxBlock>
        <DropArrow />
        <span>fx</span>
      </FxBlock>
    </FormulaRow>

    <ChartPanel>
      <Chart />
    </ChartPanel>

    <TabBar>
      <TabNav>
        {navIcons.map((d) => (
          <NavGlyph key={d} viewBox="0 0 12 10">
            <path d={d} fill="#000" stroke="#000" />
          </NavGlyph>
        ))}
      </TabNav>
      {tabs.map((t) => (
        <TabItem key={t.name} $w={t.w}>
          <TabShape width={t.w} height="20">
            <polygon points={`0,0 ${t.w},0 ${t.w + t.trail},20 ${t.lead},20`} fill={t.fill} />
            <path
              d={`M${t.w} 0L${t.w + t.trail} 20${t.lead > 0 ? `M0 0L${t.lead} 20` : ""}`}
              stroke="#6f6f6f"
              strokeWidth="1.200"
              fill="none"
            />
          </TabShape>
          <TabLabel $active={t.active} $shift={t.shift}>
            {t.name}
          </TabLabel>
        </TabItem>
      ))}
    </TabBar>

    <StatusBar>
      <StatusText>Pronto</StatusText>
      <StatusCells>
        {statusCells.map((w, i) => (
          <StatusCell key={i} $w={w}>
            {i === 4 ? "NUM" : ""}
          </StatusCell>
        ))}
      </StatusCells>
    </StatusBar>
    <BottomStrip />
  </Window>
)

export default App
